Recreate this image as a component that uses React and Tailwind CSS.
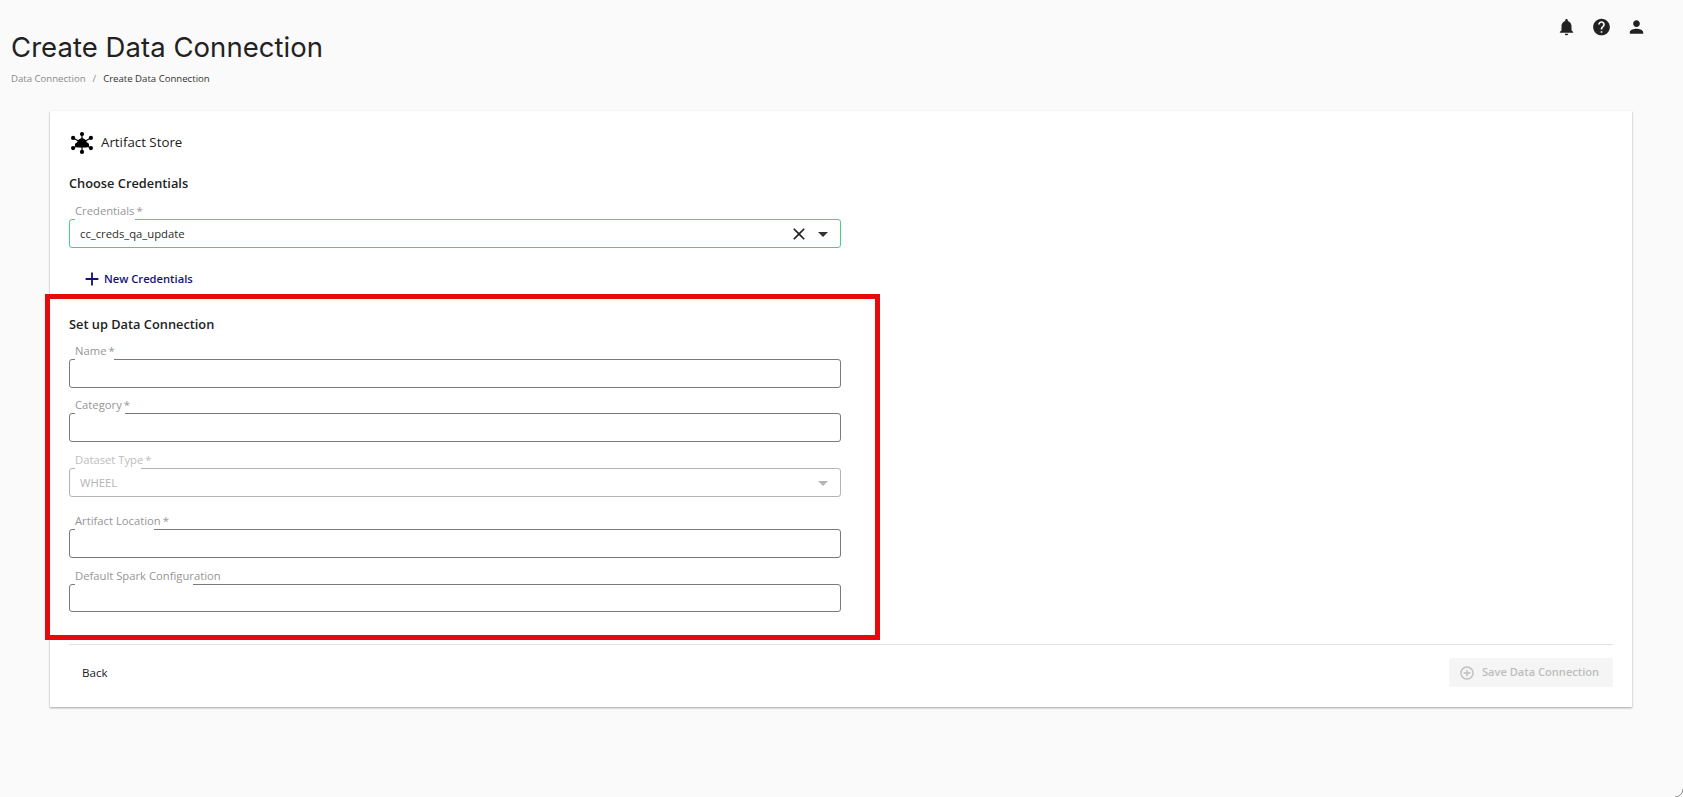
const BODY = { fontFamily: '"Open Sans", "Noto Sans", sans-serif' };

function Mui({ d, size = 20, className = "" }) {
  return (
    <svg viewBox="0 0 24 24" width={size} height={size} fill="currentColor" className={className}>
      <path d={d} />
    </svg>
  );
}

const icons = {
  bell: "M12 22c1.1 0 2-.9 2-2h-4c0 1.1.89 2 2 2zm6-6v-5c0-3.07-1.64-5.64-4.5-6.32V4c0-.83-.67-1.5-1.5-1.5s-1.5.67-1.5 1.5v.68C7.63 5.36 6 7.92 6 11v5l-2 2v1h16v-1l-2-2z",
  help: "M12 2C6.48 2 2 6.48 2 12s4.48 10 10 10 10-4.48 10-10S17.52 2 12 2zm1 17h-2v-2h2v2zm2.07-7.75l-.9.92C13.45 12.9 13 13.5 13 15h-2v-.5c0-1.1.45-2.1 1.17-2.83l1.24-1.26c.37-.36.59-.86.59-1.41 0-1.1-.9-2-2-2s-2 .9-2 2H8c0-2.21 1.79-4 4-4s4 1.79 4 4c0 .88-.36 1.68-.93 2.25z",
  person: "M12 12c2.21 0 4-1.79 4-4s-1.79-4-4-4-4 1.79-4 4 1.79 4 4 4zm0 2c-2.67 0-8 1.34-8 4v2h16v-2c0-2.66-5.33-4-8-4z",
  close: "M19 6.41L17.59 5 12 10.59 6.41 5 5 6.41 10.59 12 5 17.59 6.41 19 12 13.41 17.59 19 19 17.59 13.41 12z",
  drop: "M7 10l5 5 5-5z",
  add: "M19 13h-6v6h-2v-6H5v-2h6V5h2v6h6v2z",
  addCircle: "M13 7h-2v4H7v2h4v4h2v-4h4v-2h-4V7zm-1-5C6.48 2 2 6.48 2 12s4.48 10 10 10 10-4.48 10-10S17.52 2 12 2zm0 18c-4.41 0-8-3.59-8-8s3.59-8 8-8 8 3.59 8 8-3.59 8-8 8z",
};

function HubIcon() {
  return (
    <svg viewBox="0 0 24 24" width="22" height="22" fill="#000" stroke="#000" className="shrink-0 ml-[1.5px]">
      <g strokeWidth="1.3">
        <line x1="12" y1="2.5" x2="12" y2="21.5" />
        <line x1="2.5" y1="6.5" x2="21.5" y2="17.5" />
        <line x1="21.5" y1="6.5" x2="2.5" y2="17.5" />
      </g>
      <g stroke="none">
        <circle cx="12" cy="2.3" r="2.3" />
        <circle cx="12" cy="21.7" r="2.3" />
        <circle cx="2.3" cy="6.5" r="2.3" />
        <circle cx="21.7" cy="6.5" r="2.3" />
        <circle cx="2.3" cy="17.5" r="2.3" />
        <circle cx="21.7" cy="17.5" r="2.3" />
        <path d="M7.2 17c-1.8 0-3-1.300-3-2.800 0-1.400 1.100-2.600 2.500-2.800C7.300 8.900 9.400 6.800 12 6.800s4.700 2.100 5.300 4.600c1.400.2 2.500 1.400 2.500 2.800 0 1.500-1.200 2.800-3 2.800z" />
      </g>
    </svg>
  );
}

function Field({ label, required, value, disabled, focused, clearable, select, short, notch, className = "" }) {
  const border = focused ? "border-[#3ed28c]" : disabled ? "border-[#b4b4b4]" : "border-[#7a7a7a]";
  const labelColor = disabled ? "text-[#bdbdbd]" : "text-[#969696]";
  return (
    <div className={`relative w-[772px] ${short ? "h-[28px]" : "h-[29px]"} rounded-[3px] border bg-white flex items-center pl-[10px] pr-[5px] ${border} ${className}`}>
      <span className={`absolute left-[5px] top-[-2px] h-[3px] bg-white ${notch}`} />
      <span className={`absolute left-[5px] top-[-17px] text-[11.25px] leading-[16px] whitespace-nowrap ${labelColor}`}>
        {label}
        {required && <span className="ml-[2px]">*</span>}
      </span>
      <span className={`flex-1 pt-[1px] text-[11.25px] ${disabled ? "text-[#b5b5b5]" : "text-[#2b2b2b]"}`}>{value}</span>
      {clearable && <Mui d={icons.close} size={20} className="text-[#222] mr-[2px]" />}
      {select && <Mui d={icons.drop} size={24} className={disabled ? "text-[#b5b5b5]" : "text-[#333]"} />}
    </div>
  );
}

export default function App() {
  return (
    <div style={BODY} className="relative w-[1683px] h-[797px] overflow-hidden bg-[#fafafa] text-[#222]">
      <header className="flex justify-between h-[111px]">
        <div className="pl-[11px] pt-[29px]">
          <h1
            style={{ fontFamily: 'Inter, sans-serif' }}
            className="text-[27.5px] leading-[36px] font-normal text-[#222] tracking-[0.05px]"
          >
            Create Data Connection
          </h1>
          <nav className="mt-[6px] flex text-[9.6px] leading-[16px]">
            <span className="text-[#8a8a8a]">Data Connection</span>
            <span className="text-[#8a8a8a] mx-[7px]">/</span>
            <span className="text-[#333]">Create Data Connection</span>
          </nav>
        </div>
        <div className="flex gap-[15px] pr-[37px] pt-[17px] text-[#222] translate-x-[0.5px]">
          <Mui d={icons.bell} />
          <Mui d={icons.help} />
          <Mui d={icons.person} />
        </div>
      </header>

      <main className="ml-[50px] w-[1582px] h-[596px] bg-white shadow-[0_1px_2px_rgba(0,0,0,0.35)] pl-[19px] pr-[19px]">
        <div className="flex items-center gap-[8.5px] pt-[20px] h-[44px]">
          <HubIcon />
          <span className="text-[13.3px] font-medium text-[#222]">Artifact Store</span>
        </div>
        <h2 className="mt-[18px] text-[12.8px] leading-[20px] font-semibold text-[#222]">Choose Credentials</h2>
        <Field label="Credentials" required value="cc_creds_qa_update" focused clearable select notch="w-[60px]" className="mt-[26px]" />
        <button className="mt-[19px] ml-[12px] flex items-center h-[24px] text-[11.2px] font-semibold text-[#14127a]">
          <Mui d={icons.add} size={22} className="mr-[1px]" />
          New Credentials
        </button>

        <section className="relative mt-[23px]">
          <div className="absolute left-[-24px] top-[-20px] w-[835px] h-[346px] border-[5px] border-[#e60a0a] pointer-events-none" />
          <h2 className="text-[12.8px] leading-[20px] font-semibold text-[#222]">Set up Data Connection</h2>
          <Field label="Name" required notch="w-[39px]" className="mt-[25px]" />
          <Field label="Category" required notch="w-[50px]" className="mt-[25px]" />
          <Field label="Dataset Type" required value="WHEEL" disabled select notch="w-[66px]" className="mt-[26px]" />
          <Field label="Artifact Location" required notch="w-[79px]" className="mt-[32px]" />
          <Field label="Default Spark Configuration" short notch="w-[118px]" className="mt-[26px]" />
        </section>

        <footer className="mt-[32px] border-t border-[#e0e0e0] flex items-center justify-between pt-[13px]">
          <button className="ml-[13px] text-[11.6px] font-medium text-[#222]">Back</button>
          <button className="w-[164px] h-[29px] rounded-[3px] bg-[#f5f5f5] flex items-center gap-[7px] pl-[10px] text-[11.1px] font-semibold text-[#bdbdbd]">
            <Mui d={icons.addCircle} size={16} />
            Save Data Connection
          </button>
        </footer>
      </main>

      <svg width="12" height="12" viewBox="0 0 12 12" className="absolute right-0 bottom-0">
        <path d="M12 4V12H4A8 8 0 0 0 12 4Z" fill="#ffffff" />
        <path d="M12 4A8 8 0 0 1 4 12" fill="none" stroke="#8c8c8c" strokeWidth="1" />
      </svg>
    </div>
  );
}
